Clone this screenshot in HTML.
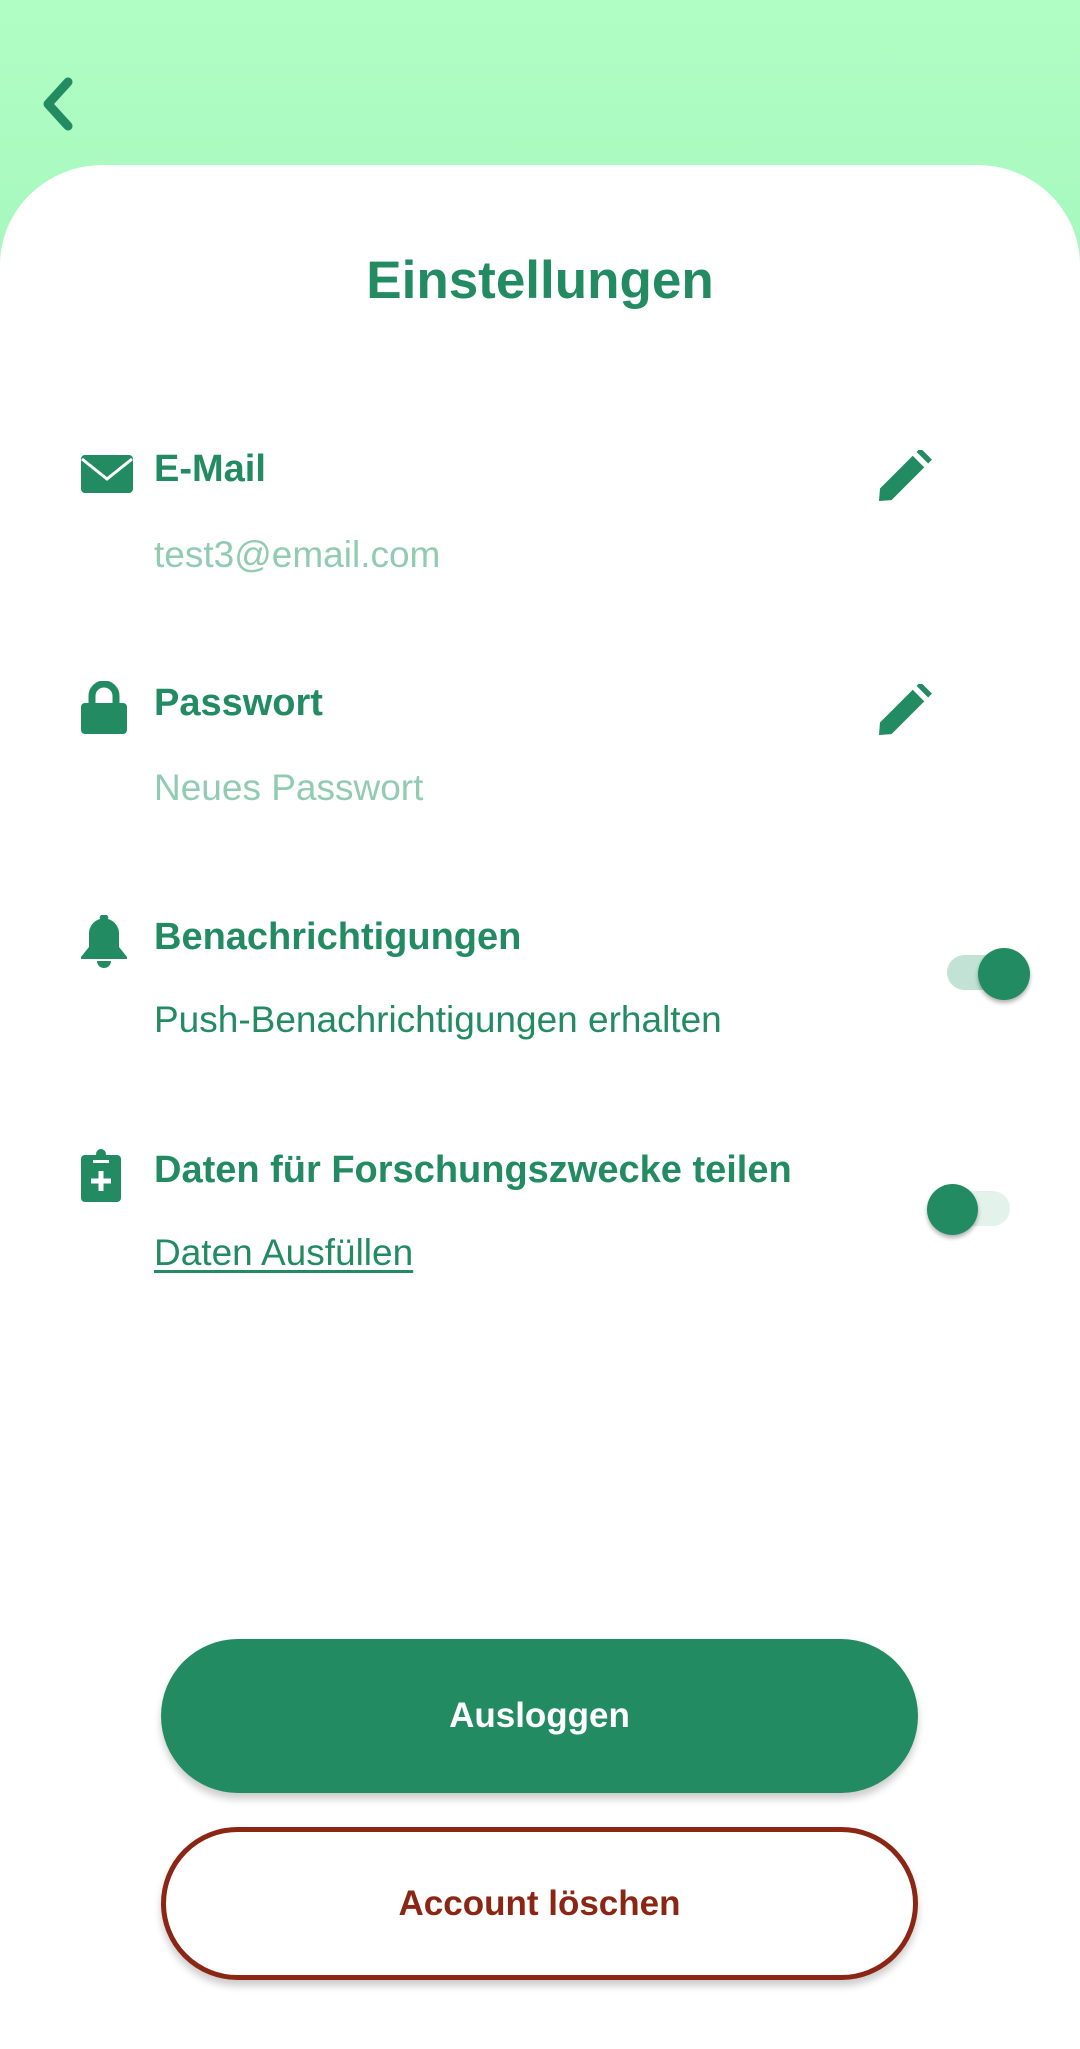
<!DOCTYPE html>
<html><head><meta charset="utf-8"><style>
*{margin:0;padding:0;box-sizing:border-box}
body{width:1080px;height:2049px;position:relative;overflow:hidden;background:linear-gradient(#b1fec4,#a6f8bf 260px);font-family:"Liberation Sans",sans-serif}
.card{position:absolute;left:0;top:165px;width:1080px;height:1884px;background:#fff;border-radius:103px 103px 0 0/100px 100px 0 0}
.t{position:absolute;white-space:nowrap;color:#228b62}
.h{font-weight:bold;font-size:38px}
.s{font-size:37px}
svg{position:absolute}
.btn{position:absolute;left:161px;width:757px;border-radius:77px;display:flex;align-items:center;justify-content:center;font-weight:bold;font-size:35px;box-shadow:0 6px 8px rgba(0,0,0,.2)}
</style></head><body>
<svg style="left:36px;top:76px" width="44" height="56" viewBox="0 0 44 56"><path d="M32 6 L12 28 L32 50" fill="none" stroke="#228b62" stroke-width="9" stroke-linecap="round" stroke-linejoin="round"/></svg>
<div class="card"></div>
<div class="t" style="left:0;width:1080px;text-align:center;top:250px;font-size:53px;font-weight:bold">Einstellungen</div>

<svg style="left:81px;top:455px" width="52" height="38" viewBox="0 0 52 38"><rect x="0" y="0" width="52" height="38" rx="4" fill="#228b62"/><path d="M1 4 L26 24 L51 4" fill="none" stroke="#fff" stroke-width="3"/></svg>
<div class="t h" style="left:154px;top:448px">E-Mail</div>
<svg style="left:878px;top:450px" width="54" height="52" viewBox="0 0 56 54"><path d="M2 40 L36 6 L48 18 L14 52 L1 53 Z" fill="#228b62"/><path d="M40 2 L44 -2 L56 10 L52 14 Z" fill="#228b62"/></svg>
<div class="t s" style="left:154px;top:534px;color:#91cbb2">test3@email.com</div>

<svg style="left:81px;top:681px" width="46" height="53" viewBox="0 0 46 53"><path d="M11 24 V15 a12 12 0 0 1 24 0 V24" fill="none" stroke="#228b62" stroke-width="7"/><rect x="0" y="22" width="46" height="31" rx="4" fill="#228b62"/></svg>
<div class="t h" style="left:154px;top:682px">Passwort</div>
<svg style="left:878px;top:684px" width="54" height="52" viewBox="0 0 56 54"><path d="M2 40 L36 6 L48 18 L14 52 L1 53 Z" fill="#228b62"/><path d="M40 2 L44 -2 L56 10 L52 14 Z" fill="#228b62"/></svg>
<div class="t s" style="left:154px;top:767px;color:#91cbb2">Neues Passwort</div>

<svg style="left:81px;top:915px" width="46" height="53" viewBox="0 0 46 53"><path d="M23 0 a3 3 0 0 1 4 4 a15 15 0 0 1 11 15 V32 L46 42 V44 H0 V42 L8 32 V19 A15 15 0 0 1 19 4 a3 3 0 0 1 4 -4Z" fill="#228b62"/><path d="M16 46 h14 a7 7 0 0 1 -14 0Z" fill="#228b62"/></svg>
<div class="t h" style="left:154px;top:916px">Benachrichtigungen</div>
<div class="t s" style="left:154px;top:999px;color:#228b62">Push-Benachrichtigungen erhalten</div>
<div style="position:absolute;left:947px;top:955px;width:80px;height:35px;border-radius:18px;background:#c1e2d4"></div>
<div style="position:absolute;left:978px;top:948px;width:52px;height:52px;border-radius:50%;background:#228b62;box-shadow:0 3px 4px rgba(0,0,0,.3)"></div>

<svg style="left:81px;top:1149px" width="40" height="53" viewBox="0 0 40 53"><rect x="0" y="6" width="40" height="47" rx="4" fill="#228b62"/><circle cx="20" cy="5" r="5" fill="#228b62"/><rect x="12" y="11" width="16" height="3" fill="#fff"/><path d="M20 22 V42 M10 32 H30" stroke="#fff" stroke-width="5"/></svg>
<div class="t h" style="left:154px;top:1149px">Daten für Forschungszwecke teilen</div>
<div class="t s" style="left:154px;top:1232px;text-decoration:underline;text-underline-offset:5px">Daten Ausfüllen</div>
<div style="position:absolute;left:940px;top:1191px;width:70px;height:35px;border-radius:18px;background:#e4f2ec"></div>
<div style="position:absolute;left:927px;top:1184px;width:51px;height:51px;border-radius:50%;background:#228b62;box-shadow:0 3px 4px rgba(0,0,0,.3)"></div>

<div class="btn" style="top:1639px;height:154px;background:#228b62;color:#fff">Ausloggen</div>
<div class="btn" style="top:1827px;height:153px;background:#fff;border:5px solid #8b2614;color:#8b2614">Account löschen</div>
</body></html>
